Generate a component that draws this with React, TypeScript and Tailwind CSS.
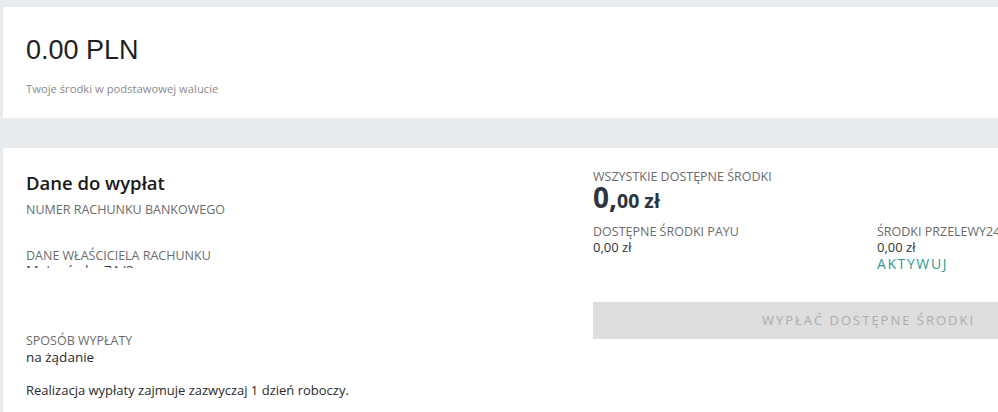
import React from "react";

const os = { fontFamily: '"Open Sans", "Noto Sans", sans-serif' };

export default function App() {
  return (
    <div className="w-full h-[412px] overflow-hidden bg-[#e9ecef] pl-[3px] pt-[7px]" style={os}>
      <div className="w-[1300px] h-[111px] bg-white pl-[23px] pt-[25px]">
        <div className="text-[27px] leading-[36px] text-[#1f1f1f]" style={{ fontFamily: '"Liberation Sans", Arial, sans-serif' }}>
          0.00 PLN
        </div>
        <div className="mt-[13px] text-[11.25px] leading-[16px] text-[#8a8a8a]">Twoje środki w podstawowej walucie</div>
      </div>

      <div className="w-[1300px] h-[300px] mt-[30px] bg-white flex pl-[23px]">
        <div className="w-[567px] pt-[21px]">
          <div className="text-[18.5px] leading-[28px] font-semibold text-[#1a1a1a]">Dane do wypłat</div>
          <div className="mt-[4px] text-[12.5px] leading-[18px] text-[#6b6b6b] uppercase">Numer rachunku bankowego</div>
          <div className="mt-[28px] text-[12.5px] leading-[18px] text-[#6b6b6b] uppercase">Dane właściciela rachunku</div>
          <div className="h-[3px] overflow-hidden text-[14px] leading-[12px] text-[#3a4a5a]">Maturówka 7A/2</div>
          <div className="mt-[64px] text-[12.5px] leading-[18px] text-[#6b6b6b] uppercase">Sposób wypłaty</div>
          <div className="text-[13.5px] leading-[15px] text-[#2b2b2b]">na żądanie</div>
          <div className="mt-[16px] text-[13px] leading-[18px] text-[#2b2b2b]">Realizacja wypłaty zajmuje zazwyczaj 1 dzień roboczy.</div>
        </div>
        <div className="w-[560px] pt-[20px]">
          <div className="text-[12.5px] leading-[18px] text-[#6b6b6b] uppercase">Wszystkie dostępne środki</div>
          <div className="font-bold text-[#2c3640] leading-[26px] -mt-[2px]">
            <span className="text-[28px]">0,</span>
            <span className="text-[19.5px]">00 zł</span>
          </div>
          <div className="grid grid-cols-[284px_1fr] mt-[8px]">
            <div>
              <div className="text-[12.5px] leading-[18px] text-[#6b6b6b] uppercase">Dostępne środki PayU</div>
              <div className="-mt-[1px] text-[13px] leading-[14px] text-[#333]">0,00 zł</div>
            </div>
            <div>
              <div className="text-[12.5px] leading-[18px] text-[#6b6b6b] uppercase whitespace-nowrap">Środki Przelewy24</div>
              <div className="-mt-[1px] text-[13px] leading-[14px] text-[#333]">0,00 zł</div>
              <div className="text-[14px] leading-[20px] tracking-[1.6px] text-[#2a9d8f] uppercase">Aktywuj</div>
            </div>
          </div>
          <div className="mt-[28px] w-[551px] h-[37px] bg-[#dedede] flex items-center justify-center text-[13px] tracking-[2px] text-[#ababab] uppercase">
            Wypłać dostępne środki
          </div>
        </div>
      </div>
    </div>
  );
}
